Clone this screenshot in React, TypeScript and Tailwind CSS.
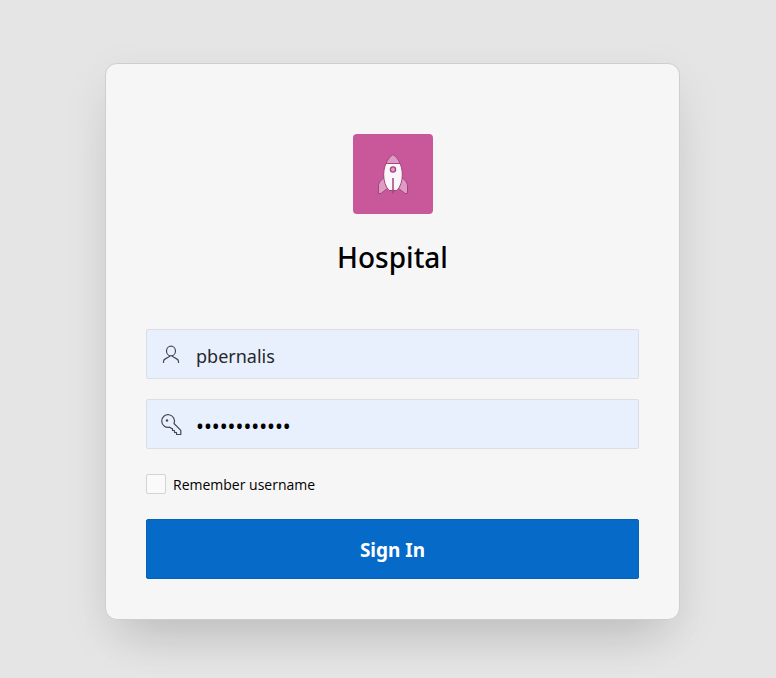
import { useState } from "react";

function RocketLogo() {
  return (
    <div className="flex size-20 items-center justify-center rounded bg-[#c9589b]">
      <svg width="32" height="42" viewBox="0 0 32 42" aria-hidden="true">
        <g stroke="#a1467c" strokeWidth="1" strokeLinejoin="round">
          <path d="M7 24.500L4 27.500C2.300 29.200 1.500 31 1.500 33V40.500H4L11.500 34.500Z" fill="#df9bc3" />
          <path d="M25 24.500L28 27.500C29.700 29.200 30.500 31 30.500 33V40.500H28L20.500 34.500Z" fill="#df9bc3" />
          <path
            d="M9 10.500H23C24.700 14 25.300 18 25.300 22C25.300 28 23.500 33.500 20 37.500H12C8.500 33.500 6.700 28 6.700 22C6.700 18 7.300 14 9 10.500Z"
            fill="#fcf5f9"
          />
          <path d="M9 10.500C10.500 6.500 13 3.500 16 1.500C19 3.500 21.500 6.500 23 10.500Z" fill="#df9bc3" />
          <circle cx="16" cy="16.500" r="2.600" fill="#df9bc3" strokeWidth="1.300" />
          <path d="M16 25V40.500" strokeWidth="1.500" />
        </g>
      </svg>
    </div>
  );
}

function UserIcon() {
  return (
    <svg width="24" height="24" viewBox="0 0 24 24" fill="none" stroke="#45484f" strokeWidth="1.2" aria-hidden="true">
      <ellipse cx="12" cy="8" rx="4.5" ry="4.9" />
      <path d="M4.500 20V18.500C4.500 17.300 5.200 16.500 6.300 15.900L10.500 13.500V12.500M19.500 20V18.500C19.500 17.300 18.800 16.500 17.700 15.900L13.500 13.500V12.500" />
    </svg>
  );
}

function KeyIcon() {
  return (
    <svg width="24" height="24" viewBox="0 0 24 24" fill="none" stroke="#45484f" strokeWidth="1.2" strokeLinejoin="round" aria-hidden="true">
      <path d="M15 10.500L21.800 17.300V21.500H17.500V19.500H15.500V17.500H13.500V15.500H12.500L10.800 14.200A6.400 6.400 0 1 1 15 10.500Z" />
      <circle cx="8" cy="7.500" r="1.200" fill="#45484f" stroke="none" />
    </svg>
  );
}

const field =
  "flex h-[50px] items-center rounded-xs border border-[#dcdee3] bg-[#e8f0fe] pt-0.5 pl-3 focus-within:border-[#056ac8]";
const input = "ml-[13px] h-full min-w-0 flex-1 bg-transparent pt-0.5 outline-none";

export default function App() {
  const [username, setUsername] = useState("pbernalis");
  const [password, setPassword] = useState("hospital2024");

  return (
    <main className="min-h-screen bg-[#e5e5e5] pt-[63px] pr-24 pb-[58px] pl-[105px] font-['Noto_Sans',sans-serif] text-black">
      <form
        onSubmit={(e) => e.preventDefault()}
        className="flex flex-col rounded-xl border border-[#cecece] bg-[#f6f6f6] px-10 pt-[70px] pb-10 shadow-[0_16px_48px_rgba(0,0,0,0.08),0_32px_48px_-24px_rgba(0,0,0,0.14)]"
      >
        <header className="flex flex-col items-center">
          <RocketLogo />
          <h1 className="mt-6 text-[28px] leading-[38px] font-medium">Hospital</h1>
        </header>

        <div className={`${field} mt-[53px]`}>
          <label htmlFor="username" aria-label="Username">
            <UserIcon />
          </label>
          <input
            id="username"
            type="text"
            value={username}
            onChange={(e) => setUsername(e.target.value)}
            className={`${input} text-[18px] text-[#26282c]`}
          />
        </div>

        <div className={`${field} mt-5`}>
          <label htmlFor="password" aria-label="Password">
            <KeyIcon />
          </label>
          <input
            id="password"
            type="password"
            value={password}
            onChange={(e) => setPassword(e.target.value)}
            className={`${input} text-[21px]`}
          />
        </div>

        <div className="mt-6 flex h-[22px] items-center">
          <input
            id="remember"
            type="checkbox"
            className="size-5 appearance-none rounded-xs border border-[#d4d4d4] bg-[#fafafa] checked:bg-[#056ac8]"
          />
          <label htmlFor="remember" className="pt-0.5 pl-[7px] font-['Open_Sans',sans-serif] text-[14px] leading-5">
            Remember username
          </label>
        </div>

        <button
          type="submit"
          className="mt-6 h-[60px] rounded-xs border border-[#0562b8] bg-[#056ac8] pt-0.5 text-[19px] font-bold text-white"
        >
          Sign In
        </button>
      </form>
    </main>
  );
}
